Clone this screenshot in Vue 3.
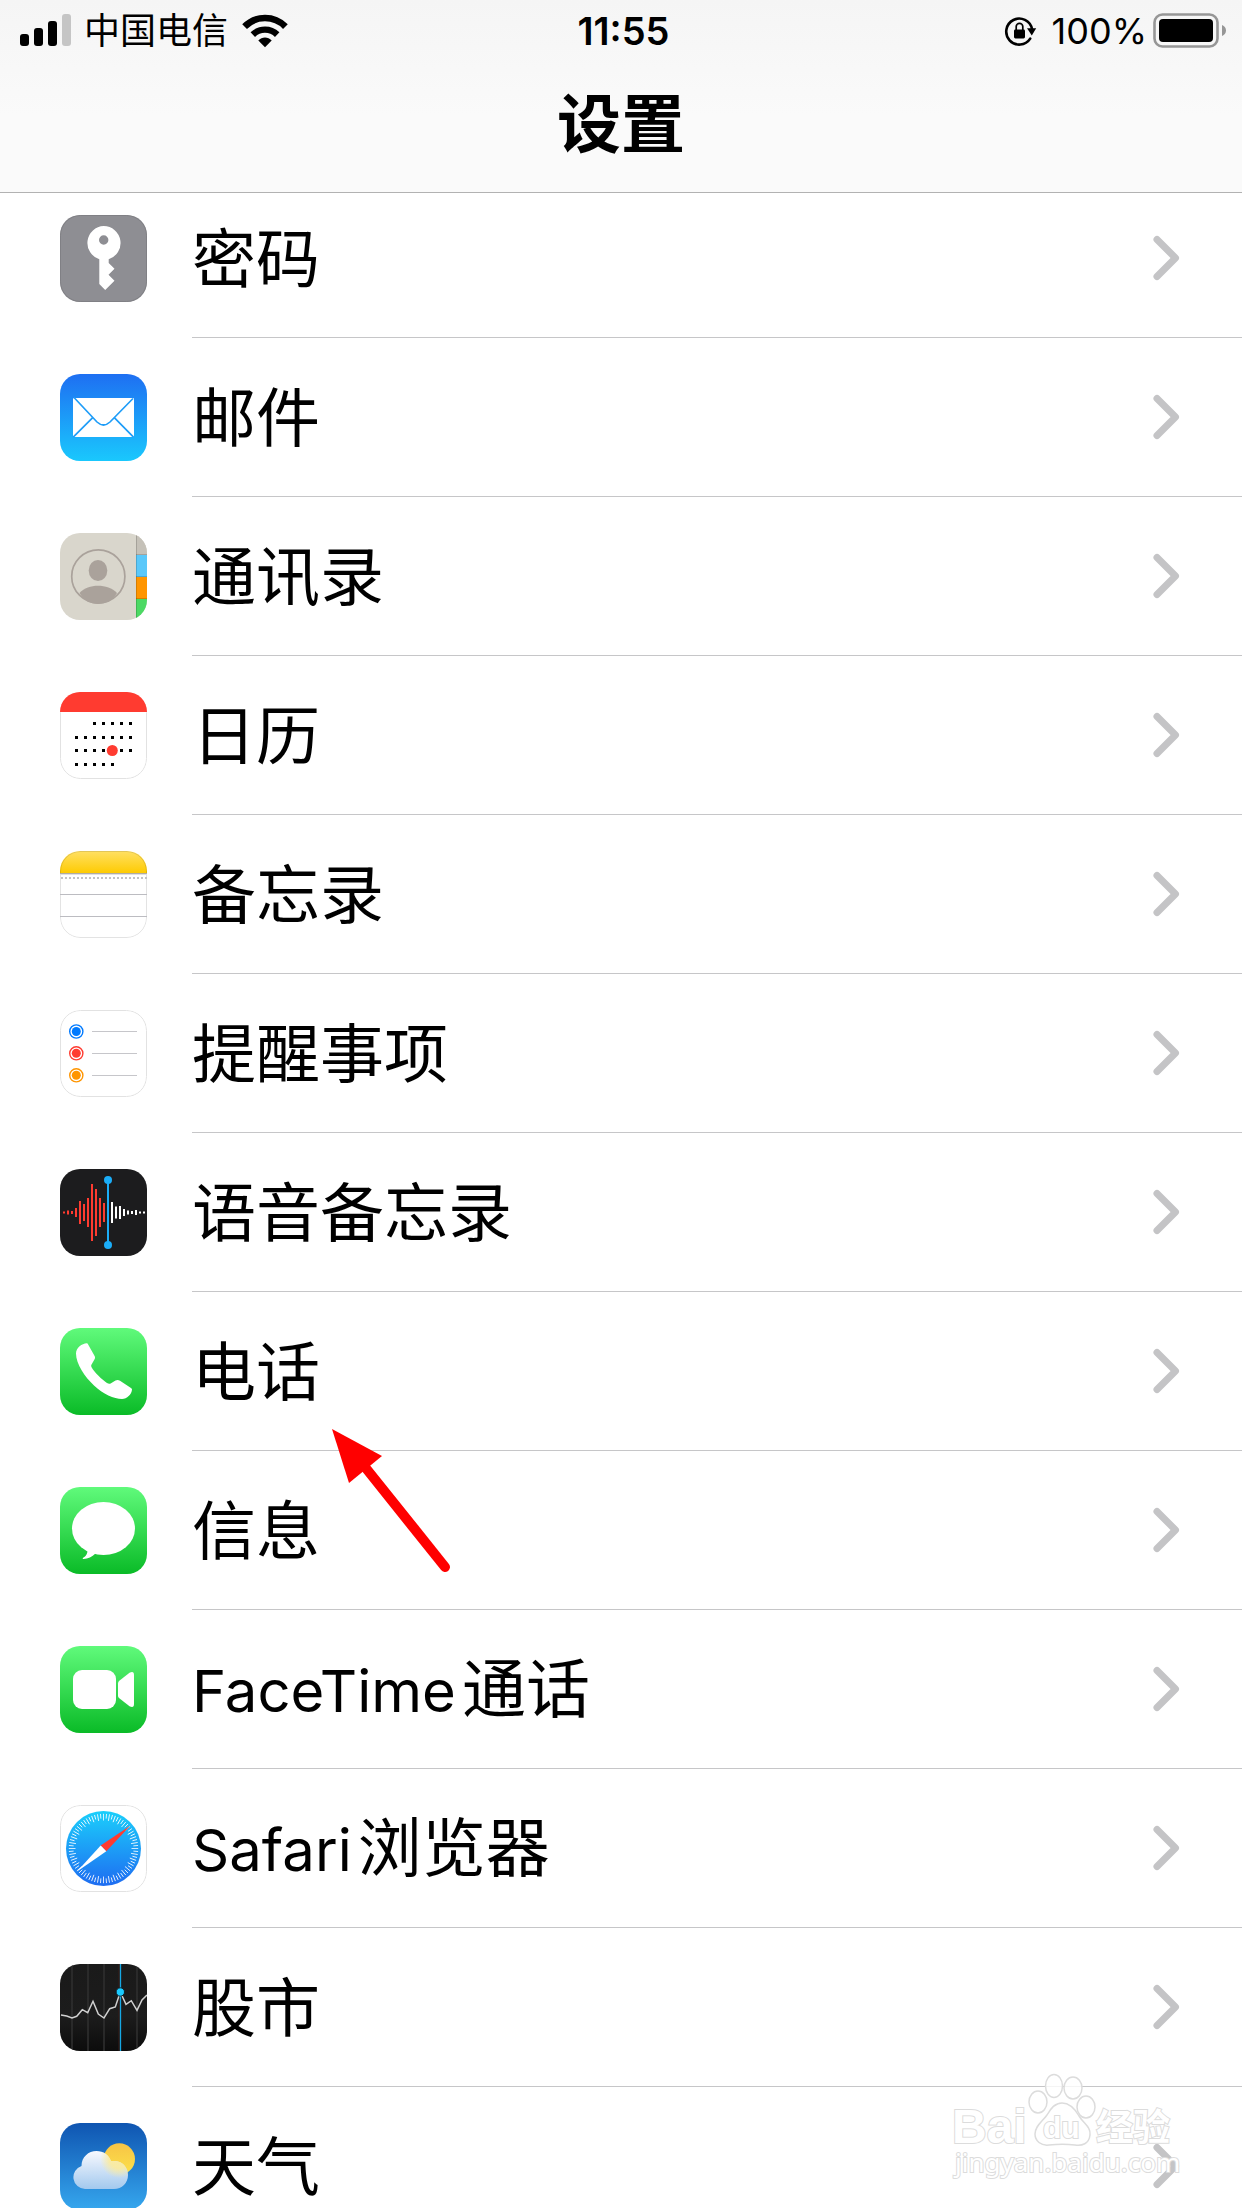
<script setup>
const rows = [
  { id: 'passwords', zh: '密码' },
  { id: 'mail', zh: '邮件' },
  { id: 'contacts', zh: '通讯录' },
  { id: 'calendar', zh: '日历' },
  { id: 'notes', zh: '备忘录' },
  { id: 'reminders', zh: '提醒事项' },
  { id: 'voice', zh: '语音备忘录' },
  { id: 'phone', zh: '电话' },
  { id: 'messages', zh: '信息' },
  { id: 'facetime', latin: 'FaceTime', zh: '通话' },
  { id: 'safari', latin: 'Safari', zh: '浏览器' },
  { id: 'stocks', zh: '股市' },
  { id: 'weather', zh: '天气' },
]

const dotColumns = [17, 26, 35, 44, 53, 62, 71]
const calendarDots = [
  { y: 31, cols: [2, 3, 4, 5, 6] },
  { y: 45, cols: [0, 1, 2, 3, 4, 5, 6] },
  { y: 58, cols: [0, 1, 2, 3, 5, 6] },
  { y: 72, cols: [0, 1, 2, 3, 4] },
].flatMap((line) => line.cols.map((c) => ({ x: dotColumns[c], y: line.y })))

const reminderDots = [
  { y: 21.5, color: '#007aff' },
  { y: 43.3, color: '#ff3b30' },
  { y: 65.3, color: '#ff9500' },
]

const redBars = [2, 4, 3, 9, 23, 17, 29, 57, 47, 29, 19]
const whiteBars = [21, 12, 13, 7, 4, 3, 5, 2, 2]

const ticks = Array.from({ length: 72 }, (_, i) => ({
  angle: i * 5,
  inner: i % 2 ? 14.5 : 16.5,
}))
</script>

<template>
  <div class="screen">
    <header class="header">
      <div class="status">
        <div class="status-left">
          <svg class="signal" width="52" height="34" viewBox="0 0 52 34" aria-hidden="true">
            <rect x="0" y="20" width="9" height="12" rx="3" />
            <rect x="14" y="14" width="9" height="18" rx="3" />
            <rect x="28" y="7" width="9" height="25" rx="3" />
            <rect x="42" y="0" width="9" height="32" rx="3" fill="#c5c5c5" />
          </svg>
          <span class="carrier">中国电信</span>
          <svg class="wifi" width="46" height="34" viewBox="0 0 46 34" aria-hidden="true">
            <path d="M2.6 12.6A28.5 28.5 0 0 1 43.4 12.6" fill="none" stroke="#000" stroke-width="6.6" />
            <path d="M10.8 20.6A17.5 17.5 0 0 1 35.2 20.6" fill="none" stroke="#000" stroke-width="6.4" />
            <path d="M16.3 26.6C20 22.6 26 22.6 29.7 26.6L23 33.2Z" />
          </svg>
        </div>
        <time class="clock">11:55</time>
        <div class="status-right">
          <svg class="lock" width="34" height="32" viewBox="0 0 34 32" aria-hidden="true">
            <path d="M26.2 23.6A13 13 0 1 1 28 14" fill="none" stroke="#000" stroke-width="2.6" stroke-linecap="round" />
            <path d="M23 13.2H32.2L27.8 20.4Z" />
            <rect x="10" y="14.5" width="11" height="9" rx="1.4" />
            <path d="M12.2 15V11.6A3.3 3.3 0 0 1 18.8 11.6V15" fill="none" stroke="#000" stroke-width="1.7" />
          </svg>
          <span class="percent">100%</span>
          <svg class="battery" width="74" height="36" viewBox="0 0 74 36" aria-hidden="true">
            <rect x="1.5" y="1.5" width="63" height="32" rx="8" fill="none" stroke="#969696" stroke-width="2.6" />
            <rect x="6" y="6" width="54" height="23" rx="4" />
            <path d="M69 12C71.6 13 73 15 73 17.5S71.6 22 69 23Z" fill="#969696" />
          </svg>
        </div>
      </div>
      <h1 class="title">设置</h1>
    </header>

    <nav class="list" aria-label="设置">
      <a v-for="row in rows" :key="row.id" class="row" :href="'#' + row.id">
        <svg class="icon" viewBox="0 0 87 87" aria-hidden="true">
          <g v-if="row.id === 'passwords'">
            <rect width="87" height="87" fill="#8e8e93" />
            <path
              fill="#fff"
              fill-rule="evenodd"
              d="M43.7 11A17 17 0 0 1 48.7 44.2V48L54.5 53.8L48.5 59.8L54.5 65.8L45.2 75L39.3 69V44.2A17 17 0 0 1 43.7 11ZM43.7 20.3A4.7 4.7 0 1 0 43.7 29.7A4.7 4.7 0 1 0 43.7 20.3Z"
            />
            <rect x=".5" y=".5" width="86" height="86" rx="20" fill="none" stroke="#808085" />
          </g>

          <g v-else-if="row.id === 'mail'">
            <defs>
              <linearGradient id="mail-bg" x2="0" y2="1">
                <stop offset="0" stop-color="#1e6ff2" />
                <stop offset="1" stop-color="#1ac8fd" />
              </linearGradient>
            </defs>
            <rect width="87" height="87" fill="url(#mail-bg)" />
            <rect x="13" y="24" width="61" height="39" rx="1" fill="#fff" />
            <g fill="none" stroke="#1f9df8" stroke-width="1.7">
              <path d="M14 23.5L37 48Q43.500 54 50 48L73 24.5" />
              <path d="M32.7 43.7L13.2 63.2M54.3 43.7L73.5 63.2" />
            </g>
          </g>

          <g v-else-if="row.id === 'contacts'">
            <rect width="87" height="87" fill="#d9d6cc" />
            <rect x="76" width="11" height="22" fill="#c5c1b8" />
            <rect x="76" y="22" width="11" height="22" fill="#5ac8fa" />
            <rect x="76" y="44" width="11" height="22" fill="#ff9500" />
            <rect x="76" y="66" width="11" height="21" fill="#4cd964" />
            <path d="M76 21.5H87M76 43.5H87M76 65.5H87M76.5 0V87" stroke="#000" stroke-opacity=".16" />
            <circle cx="38.3" cy="43.4" r="26.6" fill="none" stroke="#aaa29b" stroke-width="1.7" />
            <ellipse cx="38" cy="37.5" rx="9.3" ry="10.5" fill="#aaa29b" />
            <path d="M19.5 60C24 55 31 52.7 38 52.7S52.5 55 57 60C53 67 46 71 38 71S23.5 67 19.5 60Z" fill="#aaa29b" />
          </g>

          <g v-else-if="row.id === 'calendar'">
            <rect width="87" height="87" fill="#fff" />
            <rect x=".5" y=".5" width="86" height="86" rx="20" fill="none" stroke="#e2e2e2" />
            <rect width="87" height="20" fill="#ff3b30" />
            <rect v-for="d in calendarDots" :key="d.x + '-' + d.y" :x="d.x - 2" :y="d.y - 1" width="3" height="3" />
            <circle cx="52.3" cy="58.5" r="5.5" fill="#ff3b30" />
          </g>

          <g v-else-if="row.id === 'notes'">
            <defs>
              <linearGradient id="notes-top" x2="0" y2="1">
                <stop offset="0" stop-color="#ffe064" />
                <stop offset="1" stop-color="#fecb02" />
              </linearGradient>
            </defs>
            <rect width="87" height="87" fill="#fff" />
            <rect width="87" height="22" fill="url(#notes-top)" />
            <rect x=".5" y=".5" width="86" height="86" rx="20" fill="none" stroke="#000" stroke-opacity=".11" />
            <path d="M0 22.5H87" stroke="#b0aca4" />
            <path d="M0 23.5H87" stroke="#e0e0e0" />
            <path d="M1 27H87" stroke="#c2c2c4" stroke-width="2" stroke-dasharray="2 2" />
            <path d="M0 43.5H87M0 65.5H87" stroke="#bcbcc1" />
          </g>

          <g v-else-if="row.id === 'reminders'">
            <rect width="87" height="87" fill="#fff" />
            <rect x=".5" y=".5" width="86" height="86" rx="20" fill="none" stroke="#e2e2e2" />
            <g v-for="d in reminderDots" :key="d.y">
              <circle cx="16.3" :cy="d.y" r="6.6" fill="none" :stroke="d.color" stroke-width="1.4" />
              <circle cx="16.3" :cy="d.y" r="4.5" :fill="d.color" />
            </g>
            <path d="M32 21.5H77M32 43.5H77M32 65.5H77" stroke="#c6c6ca" />
          </g>

          <g v-else-if="row.id === 'voice'">
            <rect width="87" height="87" fill="#1c1c1e" />
            <rect v-for="(h, i) in redBars" :key="'r' + i" :x="3 + i * 4" :y="43.5 - h / 2" width="2" :height="h" fill="#ff3b30" />
            <rect v-for="(h, i) in whiteBars" :key="'w' + i" :x="51 + i * 4" :y="43.5 - h / 2" width="2" :height="h" fill="#fff" />
            <rect x="47" y="11" width="2" height="65" fill="#1badf8" />
            <circle cx="48" cy="11" r="4" fill="#1badf8" />
            <circle cx="48" cy="76" r="4" fill="#1badf8" />
          </g>

          <g v-else-if="row.id === 'phone'">
            <defs>
              <linearGradient id="phone-bg" x2="0" y2="1">
                <stop offset="0" stop-color="#60fa7b" />
                <stop offset="1" stop-color="#0abb27" />
              </linearGradient>
            </defs>
            <rect width="87" height="87" fill="url(#phone-bg)" />
            <path
              fill="#fff"
              d="M26.7 15.2C22 15.5 16 19.5 16 25.5C16 36 25 49 34 57.5C43 66 54 71 62 71C67 71 71.5 66.5 72 61.8C72 61 71.8 60.6 71 60L60 52.8C58.5 51.8 57 51.7 55.5 52.6L51 55.3C49.6 56.1 48.5 56 47 55C42 51.5 34.5 44.5 31.7 39.5C31 38.3 31 37.5 31.7 36.3L34.7 31C35.2 30 35.2 29 34.6 28L28 16.2C27.6 15.4 27.3 15.2 26.7 15.2Z"
            />
          </g>

          <g v-else-if="row.id === 'messages'">
            <defs>
              <linearGradient id="messages-bg" x2="0" y2="1">
                <stop offset="0" stop-color="#60fa7b" />
                <stop offset="1" stop-color="#0abb27" />
              </linearGradient>
            </defs>
            <rect width="87" height="87" fill="url(#messages-bg)" />
            <ellipse cx="43.5" cy="41.5" rx="31.5" ry="26.5" fill="#fff" />
            <path d="M27 61C28.5 66 26 69.5 22.8 71C22.5 71.6 23 72 23.6 72C28 72 32 69.5 35.5 66.5Z" fill="#fff" />
          </g>

          <g v-else-if="row.id === 'facetime'">
            <defs>
              <linearGradient id="facetime-bg" x2="0" y2="1">
                <stop offset="0" stop-color="#60fa7b" />
                <stop offset="1" stop-color="#0abb27" />
              </linearGradient>
            </defs>
            <rect width="87" height="87" fill="url(#facetime-bg)" />
            <rect x="13" y="24" width="43" height="39" rx="9" fill="#fff" />
            <path d="M58 37.5Q58 36 59 35L69.5 26.8Q74 24.5 74 29V58Q74 62.5 69.5 60.2L59 52Q58 51 58 49.5Z" fill="#fff" />
          </g>

          <g v-else-if="row.id === 'safari'">
            <defs>
              <linearGradient id="safari-dial" x2="0" y2="1">
                <stop offset="0" stop-color="#1bcffb" />
                <stop offset="1" stop-color="#1e6cf1" />
              </linearGradient>
            </defs>
            <rect width="87" height="87" fill="#fff" />
            <rect x=".5" y=".5" width="86" height="86" rx="20" fill="none" stroke="#e2e2e2" />
            <circle cx="43.5" cy="43.5" r="37.5" fill="url(#safari-dial)" />
            <line
              v-for="t in ticks"
              :key="t.angle"
              x1="43.5"
              y1="8.8"
              x2="43.5"
              :y2="t.inner - 1"
              stroke="#fff"
              stroke-width=".8"
              :transform="`rotate(${t.angle} 43.5 43.5)`"
            />
            <path d="M70.5 20.5L40.7 40.5L46.3 46.3Z" fill="#ff3b30" />
            <path d="M17 66.5L40.7 40.5L46.3 46.3Z" fill="#fff" />
          </g>

          <g v-else-if="row.id === 'stocks'">
            <defs>
              <linearGradient id="stocks-bg" x2="0" y2="1">
                <stop offset="0" stop-color="#1a1a1a" />
                <stop offset=".6" stop-color="#1c1c1c" />
                <stop offset="1" stop-color="#0c0c0c" />
              </linearGradient>
            </defs>
            <rect width="87" height="87" fill="url(#stocks-bg)" />
            <path d="M12 0V87M28 0V87M44 0V87M77 0V87" stroke="#303030" stroke-width="1.5" />
            <path d="M59 0V87" stroke="#3a1a14" />
            <path
              d="M1 51L6.7 52L12 54L16.7 52.3L22.3 45.7L27.7 48.7L33 37.3L38.3 50L44 54L49.7 44.7L55.3 43L60.3 28L66 40.3L71.3 36.7L77 46.3L82 36L87 31"
              fill="none"
              stroke="#d0d0d0"
              stroke-width="1.5"
            />
            <path d="M60.5 0V87" stroke="#16a8e4" stroke-width="1.3" />
            <circle cx="60.3" cy="28" r="4.2" fill="#1acbff" stroke="#10202a" />
          </g>

          <g v-else>
            <defs>
              <linearGradient id="weather-bg" x2="0" y2="1">
                <stop offset="0" stop-color="#0f55b1" />
                <stop offset="1" stop-color="#36a7ee" />
              </linearGradient>
              <linearGradient id="weather-sun" x2="0" y2="1">
                <stop offset="0" stop-color="#f7c445" />
                <stop offset="1" stop-color="#fce24b" />
              </linearGradient>
              <linearGradient id="weather-cloud" gradientUnits="userSpaceOnUse" x1="0" y1="28" x2="0" y2="66">
                <stop offset="0" stop-color="#f8f9fe" />
                <stop offset="1" stop-color="#a3c9ee" />
              </linearGradient>
              <radialGradient id="weather-glow">
                <stop offset=".5" stop-color="#fbeb9c" stop-opacity=".9" />
                <stop offset="1" stop-color="#fbeb9c" stop-opacity="0" />
              </radialGradient>
              <clipPath id="weather-clip">
                <path d="M25 66A11.8 11.8 0 0 1 21.5 43C21.5 34 28.5 28 36.5 28C43.5 28 49 32 51 38.3C61 36.8 68 43.5 68 52C68 60 62 66 54 66Z" />
              </clipPath>
            </defs>
            <rect width="87" height="87" fill="url(#weather-bg)" />
            <circle cx="59.3" cy="36" r="15.7" fill="url(#weather-sun)" />
            <g clip-path="url(#weather-clip)">
              <rect width="87" height="87" fill="url(#weather-cloud)" />
              <circle cx="59" cy="36" r="19" fill="url(#weather-glow)" />
            </g>
          </g>
        </svg>

        <span class="cell">
          <span class="label"><span v-if="row.latin" class="latin">{{ row.latin }}</span>{{ row.zh }}</span>
          <svg class="chevron" width="28" height="46" viewBox="0 0 28 46" aria-hidden="true">
            <path d="M5 4.5L23.5 23L5 41.5" fill="none" stroke="#c4c4c6" stroke-width="7" stroke-linecap="round" stroke-linejoin="round" />
          </svg>
        </span>

        <svg v-if="row.id === 'phone'" class="pointer" width="120" height="146" viewBox="0 0 120 146" aria-hidden="true">
          <path d="M33 38L113 138" stroke="#f00" stroke-width="10" stroke-linecap="round" />
          <path d="M0 0L50 27L17 54Z" fill="#f00" />
        </svg>
      </a>
    </nav>

    <svg class="watermark" width="240" height="120" viewBox="0 0 240 120" aria-hidden="true">
      <g fill="#fff" fill-opacity=".8" stroke="#dcdcdc" stroke-width="1.5">
        <ellipse cx="90" cy="32" rx="9" ry="11" />
        <ellipse cx="106" cy="16" rx="8.5" ry="11.5" />
        <ellipse cx="125" cy="18" rx="9" ry="11" />
        <ellipse cx="138" cy="37" rx="9" ry="11" />
        <path d="M114 33C121 33 127 39 131 46C136 54 143 57 142 65C141 74 134 76 127 75C119 74 110 74 101 75C93 76 87 71 87 64C87 56 94 52 99 45C103 38 107 33 114 33Z" />
      </g>
      <g class="watermark-text">
        <text x="4" y="73" font-size="48" font-weight="700">Bai</text>
        <text x="95" y="68" font-size="30" font-weight="700">du</text>
        <text x="148" y="71" font-size="37" font-weight="700">经验</text>
        <text class="watermark-url" x="7" y="102" font-size="26">jingyan.baidu.com</text>
      </g>
    </svg>
  </div>
</template>

<style>
body {
  background: #fff;
}
</style>

<style scoped>
.screen {
  position: relative;
  display: flex;
  flex-direction: column;
  height: 100vh;
  overflow: hidden;
  background: #fff;
  color: #000;
  font-family: Inter, "Noto Sans CJK SC", sans-serif;
}

.header {
  position: relative;
  z-index: 2;
  flex: none;
  border-bottom: 1px solid #b2b2b2;
  background: linear-gradient(#f5f5f5, #fafafa 60%, #fafafa);
}

.status {
  display: grid;
  grid-template-columns: 1fr auto 1fr;
  align-items: center;
  height: 62px;
  padding: 0 15px 0 20px;
  font-size: 36px;
  line-height: 44px;
}

.status-left,
.status-right {
  display: flex;
  align-items: center;
}

.status-right {
  justify-content: flex-end;
}

.carrier {
  margin: 0 14px 0 12px;
}

.clock {
  font-size: 38px;
  font-weight: 600;
}

.percent {
  margin: 0 6px 0 14px;
}

.title {
  margin: 0;
  padding: 14px 0 20px;
  font-size: 64px;
  font-weight: 700;
  line-height: 96px;
  text-align: center;
}

.list {
  flex: none;
  margin-top: -14px;
}

.row {
  position: relative;
  display: flex;
  align-items: center;
  gap: 45px;
  padding-left: 60px;
  color: inherit;
  text-decoration: none;
}

.icon {
  flex: none;
  width: 87px;
  height: 87px;
  border-radius: 20px;
}

.cell {
  display: flex;
  flex: 1;
  align-items: center;
  justify-content: space-between;
  height: 158px;
  padding-right: 62px;
  border-bottom: 1px solid #c6c6c8;
}

.label {
  padding-top: 2px;
  font-size: 64px;
  line-height: 80px;
}

.latin {
  margin-right: 6px;
  font-size: 58px;
}

.pointer {
  position: absolute;
  z-index: 1;
  top: 137px;
  left: 332px;
}

.watermark {
  position: absolute;
  z-index: 3;
  right: 54px;
  bottom: 18px;
}

.watermark-text {
  fill: #fff;
  stroke: #dcdcdc;
  stroke-width: 2px;
  paint-order: stroke;
  font-family: "Liberation Sans", "Noto Sans CJK SC", sans-serif;
}

.watermark-url {
  font-family: "Noto Sans", sans-serif;
}
</style>
